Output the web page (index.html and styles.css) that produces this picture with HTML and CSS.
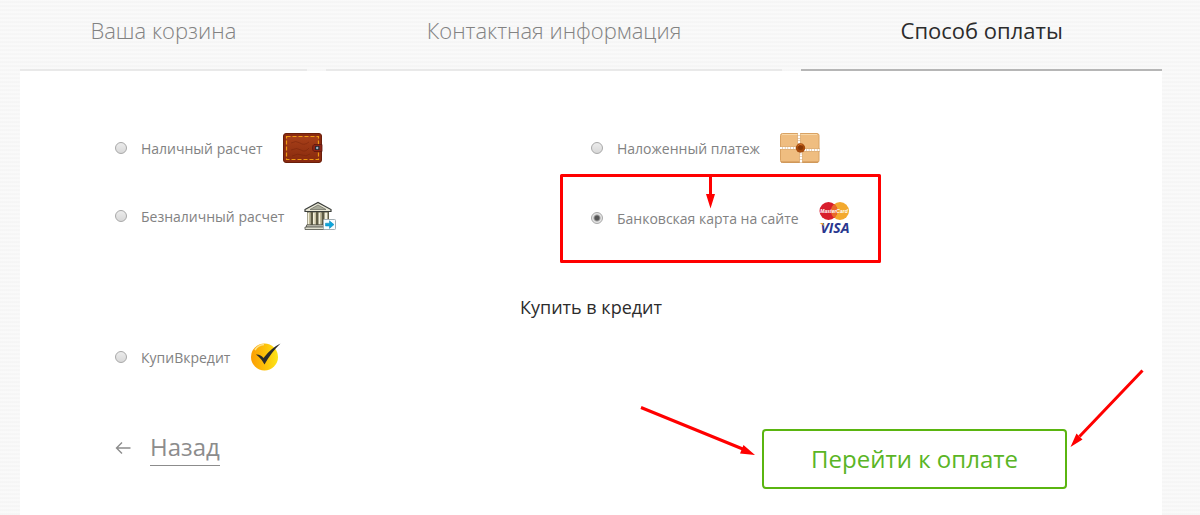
FILE: index.html
```html
<!DOCTYPE html>
<html lang="ru">

<head>
    <meta charset="utf-8">
    <meta name="viewport" content="width=device-width, initial-scale=1">
    <title>Способ оплаты</title>
    <link rel="stylesheet" href="styles.css">
</head>

<body>
    <main class="checkout">
        <ol class="steps">
            <li class="step">Ваша корзина</li>
            <li class="step">Контактная информация</li>
            <li class="step active">Способ оплаты</li>
        </ol>

        <form class="panel">
            <div class="options">
                <div class="option">
                    <input type="radio" name="payment" id="pay-cash">
                    <label for="pay-cash">Наличный расчет</label>
                    <svg class="icon" width="40" height="32" viewBox="0 0 40 32">
                        <defs>
                            <linearGradient id="leather" x1="0" y1="0" x2="0" y2="1">
                                <stop offset="0" stop-color="#a8401a"/>
                                <stop offset="1" stop-color="#8a2c0e"/>
                            </linearGradient>
                        </defs>
                        <rect x="0.5" y="1.5" width="38" height="29" rx="2.5" fill="#8a2a10" stroke="#6a1e0a"/>
                        <rect x="3" y="4" width="33" height="24" rx="1" fill="url(#leather)"/>
                        <rect x="3.5" y="4.5" width="32" height="23" fill="none" stroke="#f09a12" stroke-width="1.2" stroke-dasharray="4 2"/>
                        <path d="M8 11q5-3 9 0t9-1M8 18q6-3 10 0t8-2M9 24q6-3 10-1t8-1" fill="none" stroke="#6f1f08" stroke-width="0.8" opacity="0.5"/>
                        <path d="M31 12.500h8v7h-8q-1.500-1-1.500-3.500t1.500-3.500z" fill="#8c2416" stroke="#5d170c" stroke-width="0.8"/>
                        <rect x="32" y="14" width="4.500" height="4" rx="0.500" fill="#2b2b33"/>
                        <circle cx="34.2" cy="16" r="1.2" fill="#9db4c8"/>
                    </svg>
                </div>
                <div class="option">
                    <input type="radio" name="payment" id="pay-cod">
                    <label for="pay-cod">Наложенный платеж</label>
                    <svg class="icon" width="40" height="32" viewBox="0 0 40 32">
                        <rect x="0.5" y="1.5" width="38.5" height="29" rx="2" fill="#efbd80" stroke="#d9a263"/>
                        <path d="M2 2.500h35" stroke="#f8d8a8"/>
                        <path d="M1 30h37" stroke="#c88e50"/>
                        <path d="M0 16h17l5 2h18M19 1v10l2 8v12" fill="none" stroke="#d3a570" stroke-width="3.2"/>
                        <path d="M0 16h17l5 2h18M19 1v10l2 8v12" fill="none" stroke="#fff" stroke-width="2.2" stroke-dasharray="2.2 0.5"/>
                        <circle cx="20.5" cy="16" r="4.7" fill="#a54a0c"/>
                        <circle cx="20.5" cy="15.500" r="2.500" fill="#873706"/>
                        <path d="M17.500 14q2-2.500 5-1" fill="none" stroke="#d8732a"/>
                    </svg>
                </div>
                <div class="option">
                    <input type="radio" name="payment" id="pay-transfer">
                    <label for="pay-transfer">Безналичный расчет</label>
                    <svg class="icon" width="32" height="30" viewBox="0 0 32 30">
                        <path d="M1 8.500L14 1.500l13 7v2H1z" fill="#e9e7d6" stroke="#3a3d3a" stroke-width="1.2"/>
                        <path d="M6 8.500l8-4.500 8 4.500z" fill="#a9ab9b" stroke="#6a6c60" stroke-width="0.7"/>
                        <rect x="3" y="11" width="22" height="13" fill="#5f5c46"/>
                        <path d="M5 11.500v12M10.500 11.500v12M16 11.500v12M22 11.500v12" stroke="#f3f0dc" stroke-width="3"/>
                        <path d="M5.700 12v11M11.200 12v11M16.700 12v11" stroke="#a59c74" stroke-width="0.8"/>
                        <path d="M2.500 24h23v2h-23z" fill="#f0eedf" stroke="#4b4d45" stroke-width="0.8"/>
                        <path d="M1 26h26v2.500H1z" fill="#e0dfcf" stroke="#4b4d45" stroke-width="0.8"/>
                        <rect x="19.5" y="18.5" width="12" height="10" rx="0.8" fill="#f8fdff" stroke="#a3adb2"/>
                        <path d="M21.500 22.200h4v-2.400l4.500 3.800-4.500 3.800V25h-4z" fill="#0ca5dc" stroke="#0784b5" stroke-width="0.5"/>
                    </svg>
                </div>
                <div class="option">
                    <input type="radio" name="payment" id="pay-card" checked>
                    <label for="pay-card">Банковская карта на сайте</label>
                    <svg class="icon" width="36" height="44" viewBox="0 0 36 44">
                        <circle cx="21" cy="15" r="9" fill="#f3a92e"/>
                        <circle cx="9.5" cy="15" r="9" fill="#d81e2c"/>
                        <path d="M15.200 8.100a9 9 0 0 1 0 13.800 9 9 0 0 1 0-13.800z" fill="#e9692b"/>
                        <text class="mc-text" x="15" y="17" text-anchor="middle">MasterCard</text>
                        <text class="visa-text" x="16" y="37" text-anchor="middle">VISA</text>
                        <path d="M0.500 27h3.500l1.500 3.500q-2-2.500-5-3.500z" fill="#f3a92e"/>
                    </svg>
                </div>
            </div>

            <h2 class="credit-title">Купить в кредит</h2>

            <div class="option">
                <input type="radio" name="payment" id="pay-credit">
                <label for="pay-credit">КупиВкредит</label>
                <svg class="icon" width="32" height="30" viewBox="0 0 32 30">
                    <defs>
                        <linearGradient id="coin" x1="0" y1="0" x2="1" y2="0">
                            <stop offset="0" stop-color="#fb9d06"/>
                            <stop offset="0.6" stop-color="#fdc70a"/>
                            <stop offset="1" stop-color="#fbe51a"/>
                        </linearGradient>
                    </defs>
                    <circle cx="14.5" cy="15" r="13.5" fill="url(#coin)"/>
                    <path d="M5 8q3-5 9-5.500" fill="none" stroke="#fde28a" stroke-width="1.5"/>
                    <path d="M6 12.500q4.500-0.500 7.500 3.500Q21 6 30.500 1.500 21.500 10 14.500 22.500 11 16 6 12.500z" fill="#2b2b2b"/>
                </svg>
            </div>

            <div class="actions">
                <a class="back" href="#">
                    <svg width="16" height="14" viewBox="0 0 16 14">
                        <path d="M15.500 7H1.500M7 1.500L1.500 7 7 12.500" fill="none" stroke="#8c8c8c" stroke-width="1.4"/>
                    </svg>
                    <span>Назад</span>
                </a>
                <button class="pay" type="submit">Перейти к оплате</button>
            </div>
        </form>
    </main>

    <!-- hint arrows over the form -->
    <svg class="hints" width="1200" height="515" viewBox="0 0 1200 515">
        <g fill="none" stroke="#f00" stroke-width="3" stroke-linejoin="round">
            <rect x="561.5" y="175.5" width="318" height="86"/>
            <path d="M710.500 176v20M641 407.500l103 42M1142.500 370.500l-63 66"/>
        </g>
        <path d="M706 194h9l-4.500 14.500zM743.500 445l11.500 10-15-1.500zM1076.500 433.500l6 6-12 7.500z" fill="#f00"/>
    </svg>
</body>

</html>
```
FILE: styles.css
```css
* {
    box-sizing: border-box;
}

body {
    position: relative;
    margin: 0;
    min-height: 100vh;
    font-family: "Open Sans", "Noto Sans", sans-serif;
    font-size: 14px;
    color: #828282;
    background: repeating-linear-gradient(#fbfbfb 0, #f4f4f4 2px, #fbfbfb 4px);
}

.checkout {
    display: flex;
    flex-direction: column;
    min-height: 100vh;
    margin: 0 38px 0 20px;
}

.steps {
    display: grid;
    grid-template-columns: 287fr 457fr 361fr;
    gap: 19px;
    margin: 0;
    padding: 0;
    list-style: none;
}

.step {
    padding: 15px 0 24px;
    border-bottom: 2px solid #e9e9e9;
    font-size: 22px;
    font-weight: 300;
    line-height: 30px;
    text-align: center;
}

.step.active {
    border-color: #b6b6b6;
    font-weight: 400;
    color: #2c2c2c;
}

.panel {
    flex: 1;
    padding: 57px 95px 24px;
    background: #fff;
}

.options {
    display: grid;
    grid-template-columns: 1fr 1fr;
    align-items: start;
    row-gap: 28px;
}

.option {
    display: flex;
    align-items: center;
    min-height: 40px;
}

.option input {
    appearance: none;
    width: 12px;
    height: 12px;
    margin: 0 14px 0 0;
    border: 1px solid #a8a8a8;
    border-radius: 50%;
    background: linear-gradient(#ececec, #d8d8d8);
}

.option input:checked {
    background: radial-gradient(circle, #555 2px, #e4e4e4 4px);
}

.icon {
    margin-left: 20px;
}

.mc-text {
    font: italic bold 5px "Liberation Sans", sans-serif;
    fill: #fff;
}

.visa-text {
    font: italic bold 14px "Open Sans", sans-serif;
    fill: #29378f;
}

.credit-title {
    margin: 54px 0 17px;
    font-size: 18px;
    font-weight: 400;
    line-height: 26px;
    text-align: center;
    color: #2c2c2c;
}

.actions {
    display: flex;
    justify-content: space-between;
    align-items: flex-start;
    margin-top: 52px;
}

.back {
    display: flex;
    align-items: center;
    gap: 19px;
    font-size: 24px;
    line-height: 36px;
    color: #8c8c8c;
    text-decoration: none;
}

.back span {
    border-bottom: 1px solid #8c8c8c;
}

.pay {
    padding: 10px 47px;
    border: 2px solid #5ab510;
    border-radius: 4px;
    background: #fff;
    font-family: inherit;
    font-size: 24px;
    line-height: 36px;
    color: #5ab525;
    cursor: pointer;
}

.hints {
    position: absolute;
    top: 0;
    left: 0;
    pointer-events: none;
}
```
